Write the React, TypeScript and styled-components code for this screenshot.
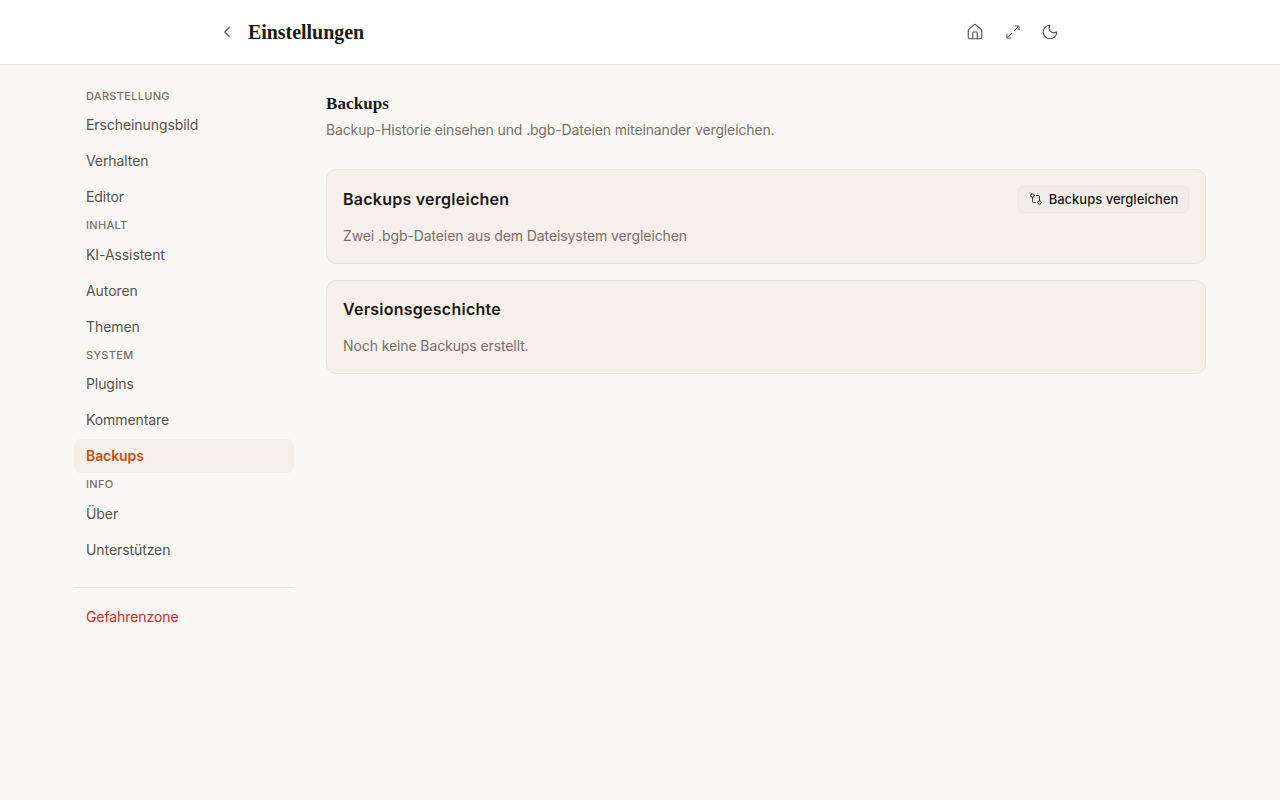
import React from "react";
import styled, { createGlobalStyle } from "styled-components";
import { ChevronLeft, House, Maximize2, Moon, GitCompare } from "lucide-react";

const Global = createGlobalStyle`
  * { box-sizing: border-box; }
  html, body { margin: 0; padding: 0; }
  body {
    background: #faf8f5;
    font-family: Inter, "Liberation Sans", sans-serif;
    color: #1c1917;
  }
`;

const Page = styled.div`
  min-height: 800px;
  background: #faf8f5;
`;

const Header = styled.header`
  height: 65px;
  background: #ffffff;
  border-bottom: 1px solid #e7e5e1;
  display: flex;
  justify-content: center;
`;

const HeaderInner = styled.div`
  width: 858px;
  display: flex;
  align-items: center;
  justify-content: space-between;
`;

const HeaderLeft = styled.div`
  display: flex;
  align-items: center;
  gap: 5px;
`;

const HeaderTitle = styled.h1`
  margin: 1px 0 0;
  font-family: "Liberation Serif", serif;
  font-size: 20px;
  font-weight: 700;
  letter-spacing: -0.05px;
  color: #1c1917;
`;

const HeaderRight = styled.div`
  display: flex;
  align-items: center;
  gap: 5.4px;
  padding-right: 3px;
`;

const IconButton = styled.button`
  width: 32px;
  height: 32px;
  padding: 0;
  border: 0;
  background: transparent;
  color: #57534e;
  display: flex;
  align-items: center;
  justify-content: center;
`;

const Layout = styled.div`
  width: 1132px;
  margin: 0 auto;
  padding-top: 22.5px;
  display: flex;
  gap: 32px;
  align-items: flex-start;
`;

const Sidebar = styled.nav`
  width: 220px;
  flex-shrink: 0;
  display: flex;
  flex-direction: column;
`;

const Section = styled.div`
  display: flex;
  flex-direction: column;
  gap: 2px;
  margin-bottom: 3.6px;
`;

const SectionLabel = styled.div`
  height: 16px;
  line-height: 16px;
  margin-bottom: 2px;
  padding: 0 12px;
  font-size: 11px;
  font-weight: 500;
  letter-spacing: 0.3px;
  text-transform: uppercase;
  color: #78716c;
`;

const NavItem = styled.a<{ $active?: boolean; $danger?: boolean }>`
  height: 34px;
  display: flex;
  align-items: center;
  padding: 0 12px;
  border-radius: 6px;
  font-size: 14px;
  letter-spacing: -0.08px;
  font-weight: ${(p) => (p.$active ? 600 : 400)};
  color: ${(p) => (p.$danger ? "#dc2626" : p.$active ? "#c2500f" : "#57534e")};
  background: ${(p) => (p.$active ? "#f5f0e9" : "transparent")};
`;

const Divider = styled.hr`
  width: 100%;
  margin: 17px 0 11.5px;
  border: 0;
  border-top: 1px solid #e7e5e1;
`;

const Main = styled.main`
  flex: 1;
  display: flex;
  flex-direction: column;
  padding-top: 0.5px;
`;

const PageTitle = styled.h2`
  margin: 5px 0 0;
  height: 22px;
  line-height: 22px;
  font-family: "Liberation Serif", serif;
  font-size: 17px;
  font-weight: 700;
  letter-spacing: 0.1px;
  color: #1c1917;
`;

const PageSubtitle = styled.p`
  margin: 5px 0 29px;
  height: 20px;
  line-height: 20px;
  font-size: 14px;
  letter-spacing: -0.14px;
  color: #78716c;
`;

const Cards = styled.div`
  display: flex;
  flex-direction: column;
  gap: 16px;
`;

const Card = styled.section`
  height: 94.5px;
  padding: 16px;
  background: #f5f0e9;
  border: 1px solid #e7e5e1;
  border-radius: 10px;
`;

const CardHead = styled.div`
  height: 25.6px;
  display: flex;
  align-items: center;
  justify-content: space-between;
`;

const CardTitle = styled.h3`
  margin: 0;
  font-size: 16px;
  font-weight: 600;
  letter-spacing: 0.25px;
  color: #1c1917;
`;

const CardText = styled.p`
  margin: 14px 0 0;
  line-height: 20px;
  font-size: 14px;
  letter-spacing: -0.1px;
  color: #78716c;
`;

const CompareButton = styled.button`
  height: 27px;
  width: 171px;
  flex-shrink: 0;
  margin-top: 1px;
  padding: 0;
  display: flex;
  align-items: center;
  justify-content: center;
  gap: 6px;
  border: 1px solid #ebe8e3;
  border-radius: 6px;
  background: #f2efea;
  font-family: inherit;
  font-size: 13px;
  font-weight: 500;
  color: #1c1917;
`;

const sections = [
  { label: "Darstellung", items: ["Erscheinungsbild", "Verhalten", "Editor"] },
  { label: "Inhalt", items: ["KI-Assistent", "Autoren", "Themen"] },
  { label: "System", items: ["Plugins", "Kommentare", "Backups"] },
  { label: "Info", items: ["Über", "Unterstützen"] },
];

export default function App() {
  return (
    <Page>
      <Global />
      <Header>
        <HeaderInner>
          <HeaderLeft>
            <IconButton aria-label="Zurück"><ChevronLeft size={18} strokeWidth={1.5} /></IconButton>
            <HeaderTitle>Einstellungen</HeaderTitle>
          </HeaderLeft>
          <HeaderRight>
            <IconButton aria-label="Start"><House size={18} strokeWidth={1.5} /></IconButton>
            <IconButton aria-label="Vollbild"><Maximize2 size={16} strokeWidth={1.5} /></IconButton>
            <IconButton aria-label="Design"><Moon size={18} strokeWidth={1.5} /></IconButton>
          </HeaderRight>
        </HeaderInner>
      </Header>
      <Layout>
        <Sidebar>
          {sections.map((s) => (
            <Section key={s.label}>
              <SectionLabel>{s.label}</SectionLabel>
              {s.items.map((i) => (
                <NavItem key={i} $active={i === "Backups"}>{i}</NavItem>
              ))}
            </Section>
          ))}
          <Divider />
          <NavItem $danger>Gefahrenzone</NavItem>
        </Sidebar>
        <Main>
          <PageTitle>Backups</PageTitle>
          <PageSubtitle>Backup-Historie einsehen und .bgb-Dateien miteinander vergleichen.</PageSubtitle>
          <Cards>
            <Card>
              <CardHead>
                <CardTitle>Backups vergleichen</CardTitle>
                <CompareButton><GitCompare size={14} strokeWidth={1.5} />Backups vergleichen</CompareButton>
              </CardHead>
              <CardText>Zwei .bgb-Dateien aus dem Dateisystem vergleichen</CardText>
            </Card>
            <Card>
              <CardHead>
                <CardTitle>Versionsgeschichte</CardTitle>
              </CardHead>
              <CardText>Noch keine Backups erstellt.</CardText>
            </Card>
          </Cards>
        </Main>
      </Layout>
    </Page>
  );
}
